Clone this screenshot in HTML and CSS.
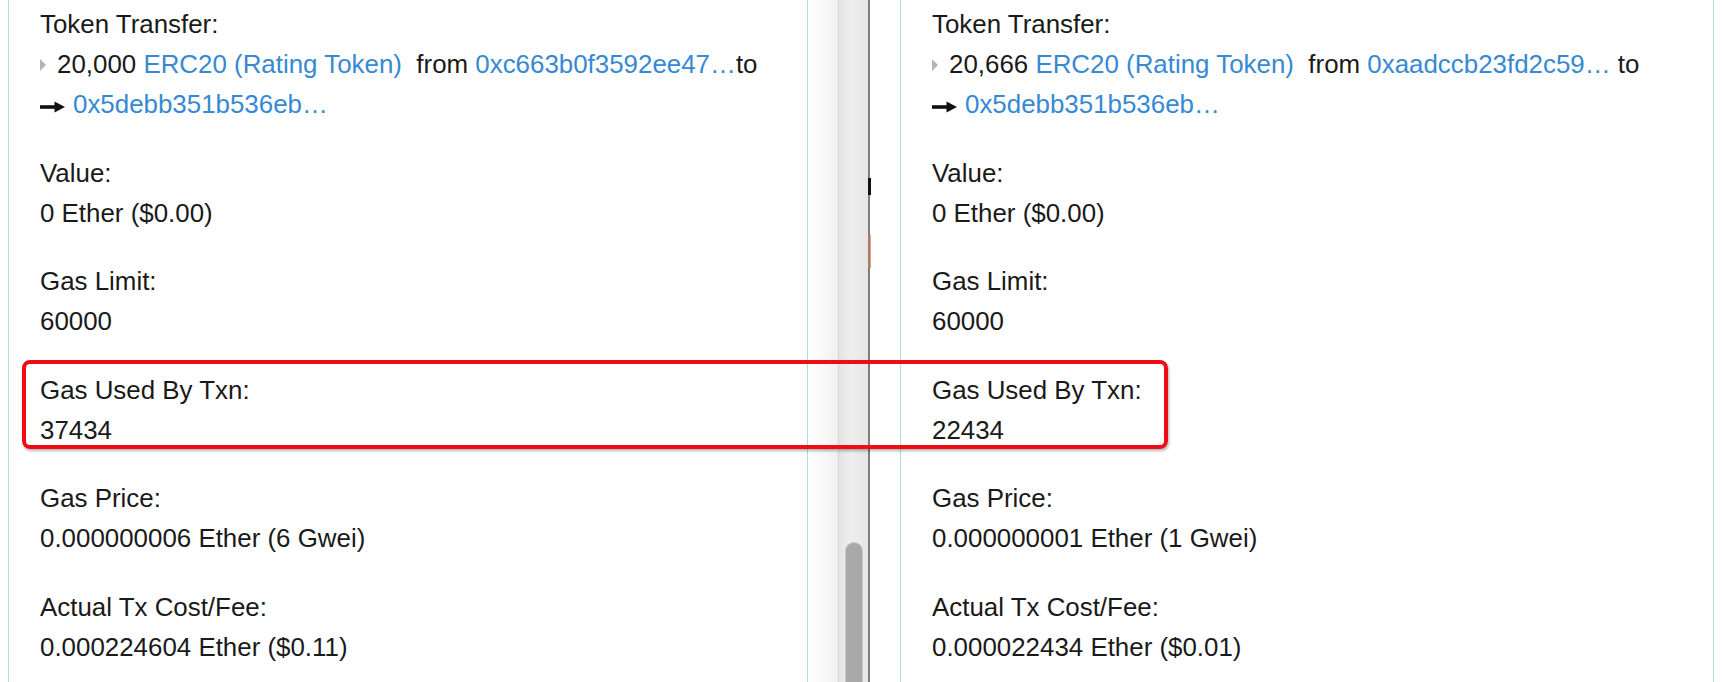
FILE: index.html
```html
<!DOCTYPE html>
<html lang="en">
<head>
<meta charset="utf-8">
<title>Gas comparison</title>
<link rel="stylesheet" href="styles.css">
</head>
<body>
<div class="screen">
  <div class="window window-left">
    <div class="panel panel-left">
      <div class="field">
        <div class="line">Token Transfer:</div>
        <div class="line"><span class="tri"></span>20,000 <a class="link">ERC20 (Rating Token)</a>&nbsp; from <a class="link">0xc663b0f3592ee47…</a>to</div>
        <div class="line"><svg class="arrow" width="25" height="12" viewBox="0 0 25 12"><rect x="0" y="4.2" width="17" height="3.6" fill="#111"/><polygon points="14.5,0.5 25,6 14.5,11.5" fill="#111"/></svg><a class="link">0x5debb351b536eb…</a></div>
      </div>
      <div class="field">
        <div class="line">Value:</div>
        <div class="line">0 Ether ($0.00)</div>
      </div>
      <div class="field">
        <div class="line">Gas Limit:</div>
        <div class="line">60000</div>
      </div>
      <div class="field">
        <div class="line">Gas Used By Txn:</div>
        <div class="line">37434</div>
      </div>
      <div class="field">
        <div class="line">Gas Price:</div>
        <div class="line">0.000000006 Ether (6 Gwei)</div>
      </div>
      <div class="field">
        <div class="line">Actual Tx Cost/Fee:</div>
        <div class="line">0.000224604 Ether ($0.11)</div>
      </div>
    </div>
    <div class="shade"></div>
    <div class="scrollbar"><div class="thumb"></div></div>
    <div class="edge"><span class="mark mark-dark"></span><span class="mark mark-orange"></span></div>
  </div>
  <div class="window window-right">
    <div class="panel panel-right">
      <div class="field">
        <div class="line">Token Transfer:</div>
        <div class="line"><span class="tri"></span>20,666 <a class="link">ERC20 (Rating Token)</a>&nbsp; from <a class="link">0xaadccb23fd2c59…</a> to</div>
        <div class="line"><svg class="arrow" width="25" height="12" viewBox="0 0 25 12"><rect x="0" y="4.2" width="17" height="3.6" fill="#111"/><polygon points="14.5,0.5 25,6 14.5,11.5" fill="#111"/></svg><a class="link">0x5debb351b536eb…</a></div>
      </div>
      <div class="field">
        <div class="line">Value:</div>
        <div class="line">0 Ether ($0.00)</div>
      </div>
      <div class="field">
        <div class="line">Gas Limit:</div>
        <div class="line">60000</div>
      </div>
      <div class="field">
        <div class="line">Gas Used By Txn:</div>
        <div class="line">22434</div>
      </div>
      <div class="field">
        <div class="line">Gas Price:</div>
        <div class="line">0.000000001 Ether (1 Gwei)</div>
      </div>
      <div class="field">
        <div class="line">Actual Tx Cost/Fee:</div>
        <div class="line">0.000022434 Ether ($0.01)</div>
      </div>
    </div>
  </div>
  <div class="highlight"></div>
</div>
</body>
</html>
```
FILE: styles.css
```css
html, body {
  margin: 0;
  padding: 0;
  background: #ffffff;
}
body {
  font-family: "Liberation Sans", Arial, Helvetica, sans-serif;
  font-size: 25.9px;
  color: #1a1a1a;
  overflow: hidden;
}
.screen {
  position: relative;
  display: flex;
  width: 1722px;
  height: 682px;
  overflow: hidden;
}
.window {
  display: flex;
  height: 100%;
}
.window-left {
  width: 870px;
  flex: none;
}
.window-right {
  flex: 1;
  padding-left: 30px;
  padding-right: 8px;
}
.panel {
  height: 100%;
  box-sizing: border-box;
  border-left: 1px solid #a9dce3;
  border-right: 1px solid #a9dce3;
  padding: 4px 0 0 31px;
  white-space: nowrap;
}
.panel-left {
  margin-left: 8px;
  width: 800px;
  flex: none;
}
.panel-right {
  flex: 1;
}
.field {
  margin-bottom: 28.6px;
}
.line {
  height: 40px;
  line-height: 40px;
}
.link {
  color: #3689d2;
  text-decoration: none;
}
.tri {
  display: inline-block;
  width: 0;
  height: 0;
  border-top: 6.5px solid transparent;
  border-bottom: 6.5px solid transparent;
  border-left: 6px solid #b4b4b4;
  margin-right: 11px;
  vertical-align: 2px;
}
.arrow {
  display: inline-block;
  vertical-align: 0px;
  margin-right: 8px;
}
.shade {
  width: 30px;
  flex: none;
  background: linear-gradient(to right, #ffffff 0%, #f7f7f7 60%, #f0f0f0 100%);
}
.scrollbar {
  position: relative;
  width: 30px;
  flex: none;
  box-sizing: border-box;
  border-left: 1px solid #d6d6d6;
  background: linear-gradient(to right, #e4e4e4 0%, #eeeeee 40%, #e6e6e6 100%);
}
.thumb {
  position: absolute;
  left: 7px;
  top: 543px;
  width: 16px;
  height: 160px;
  border-radius: 8px;
  background: #a9a9a9;
  box-shadow: 0 0 0 1px #c8c8c8;
}
.edge {
  position: relative;
  width: 2px;
  flex: none;
  background: #7c7c7c;
}
.mark {
  position: absolute;
  left: 0;
  width: 3px;
}
.mark-dark {
  top: 178px;
  height: 17px;
  background: #111;
}
.mark-orange {
  top: 235px;
  height: 33px;
  background: #c27a52;
  opacity: 0.7;
}
.highlight {
  position: absolute;
  left: 22px;
  top: 360px;
  width: 1146px;
  height: 89px;
  box-sizing: border-box;
  border: 4px solid #ee0d14;
  border-radius: 8px;
  box-shadow: 1px 2px 3px rgba(0, 0, 0, 0.3);
  pointer-events: none;
}
```
